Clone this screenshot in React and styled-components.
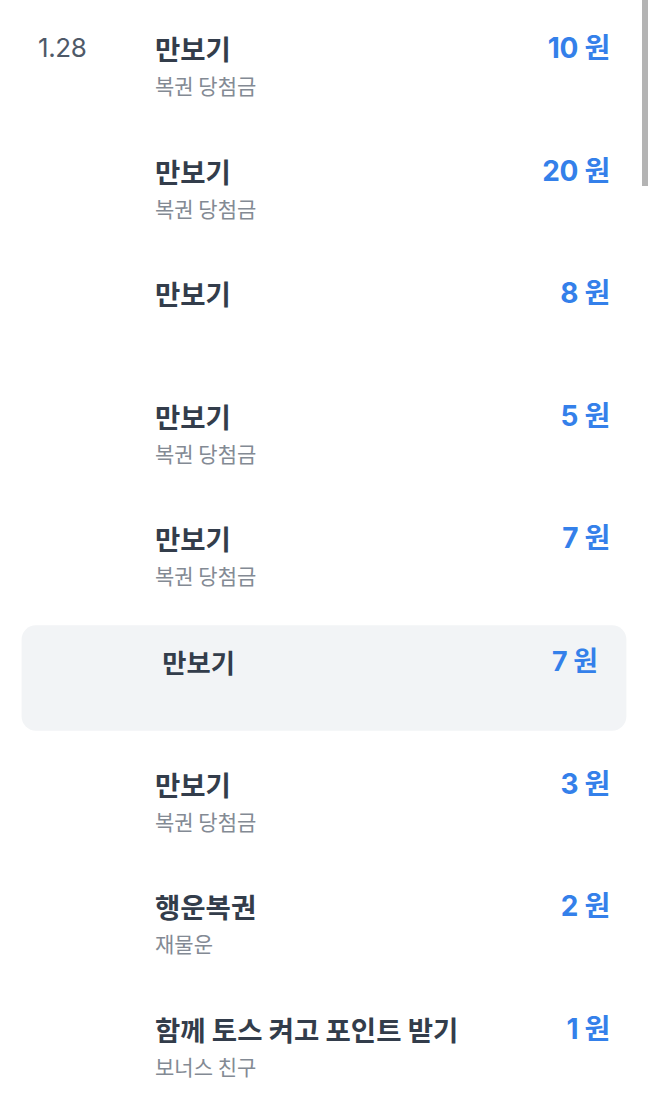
import styled, { createGlobalStyle } from "styled-components";

const rows = [
  { date: "1.28", title: "만보기", sub: "복권 당첨금", amount: 10 },
  { title: "만보기", sub: "복권 당첨금", amount: 20 },
  { title: "만보기", amount: 8 },
  { title: "만보기", sub: "복권 당첨금", amount: 5 },
  { title: "만보기", sub: "복권 당첨금", amount: 7 },
  { title: "만보기", amount: 7, pressed: true },
  { title: "만보기", sub: "복권 당첨금", amount: 3 },
  { title: "행운복권", sub: "재물운", amount: 2 },
  { title: "함께 토스 켜고 포인트 받기", sub: "보너스 친구", amount: 1 },
];

export default function App() {
  return (
    <>
      <GlobalStyle />
      <Page>
        <List>
          {rows.map((row, i) => (
            <Item key={i} $pressed={row.pressed}>
              <DateCell>{row.date}</DateCell>
              <Info>
                <Title>{row.title}</Title>
                {row.sub && <Sub>{row.sub}</Sub>}
              </Info>
              <Amount>{row.amount} 원</Amount>
            </Item>
          ))}
        </List>
        <ScrollThumb />
      </Page>
    </>
  );
}

const GlobalStyle = createGlobalStyle`
  html, body {
    margin: 0;
    padding: 0;
    overflow: hidden;
    background: #fff;
  }
  body {
    font-family: Inter, "Noto Sans CJK KR", sans-serif;
    -webkit-font-smoothing: antialiased;
  }
`;

const Page = styled.div`
  position: relative;
  width: 648px;
  height: 1105px;
  overflow: hidden;
  background: #fff;
`;

const List = styled.div`
  display: flex;
  flex-direction: column;
  gap: 12.6px;
  padding: 10px 8px 0;
`;

const Item = styled.div`
  display: flex;
  align-items: flex-start;
  height: 110px;
  box-sizing: border-box;
  padding: 19px 30px 0 30px;
  border-radius: 15px;
  background: ${(p) => (p.$pressed ? "#f2f4f6" : "transparent")};
  transform: ${(p) => (p.$pressed ? "scale(0.957)" : "none")};
`;

const DateCell = styled.div`
  width: 117px;
  flex-shrink: 0;
  font-size: 26px;
  line-height: 38px;
  color: #4e5968;
  letter-spacing: -0.4px;
`;

const Info = styled.div`
  flex: 1;
  display: flex;
  flex-direction: column;
  gap: 4px;
`;

const Title = styled.div`
  font-family: "Noto Sans CJK KR", sans-serif;
  font-size: 27.5px;
  font-weight: 700;
  line-height: 38px;
  color: #333d4b;
`;

const Sub = styled.div`
  font-family: "Noto Sans CJK KR", sans-serif;
  font-size: 21px;
  line-height: 28px;
  color: #838a94;
`;

const Amount = styled.div`
  font-size: 28px;
  font-weight: 700;
  line-height: 38px;
  color: #3480ea;
  white-space: nowrap;
  letter-spacing: -0.3px;
`;

const ScrollThumb = styled.div`
  position: absolute;
  top: 0;
  right: 0;
  width: 6px;
  height: 186px;
  background: #b4b4b4;
`;
